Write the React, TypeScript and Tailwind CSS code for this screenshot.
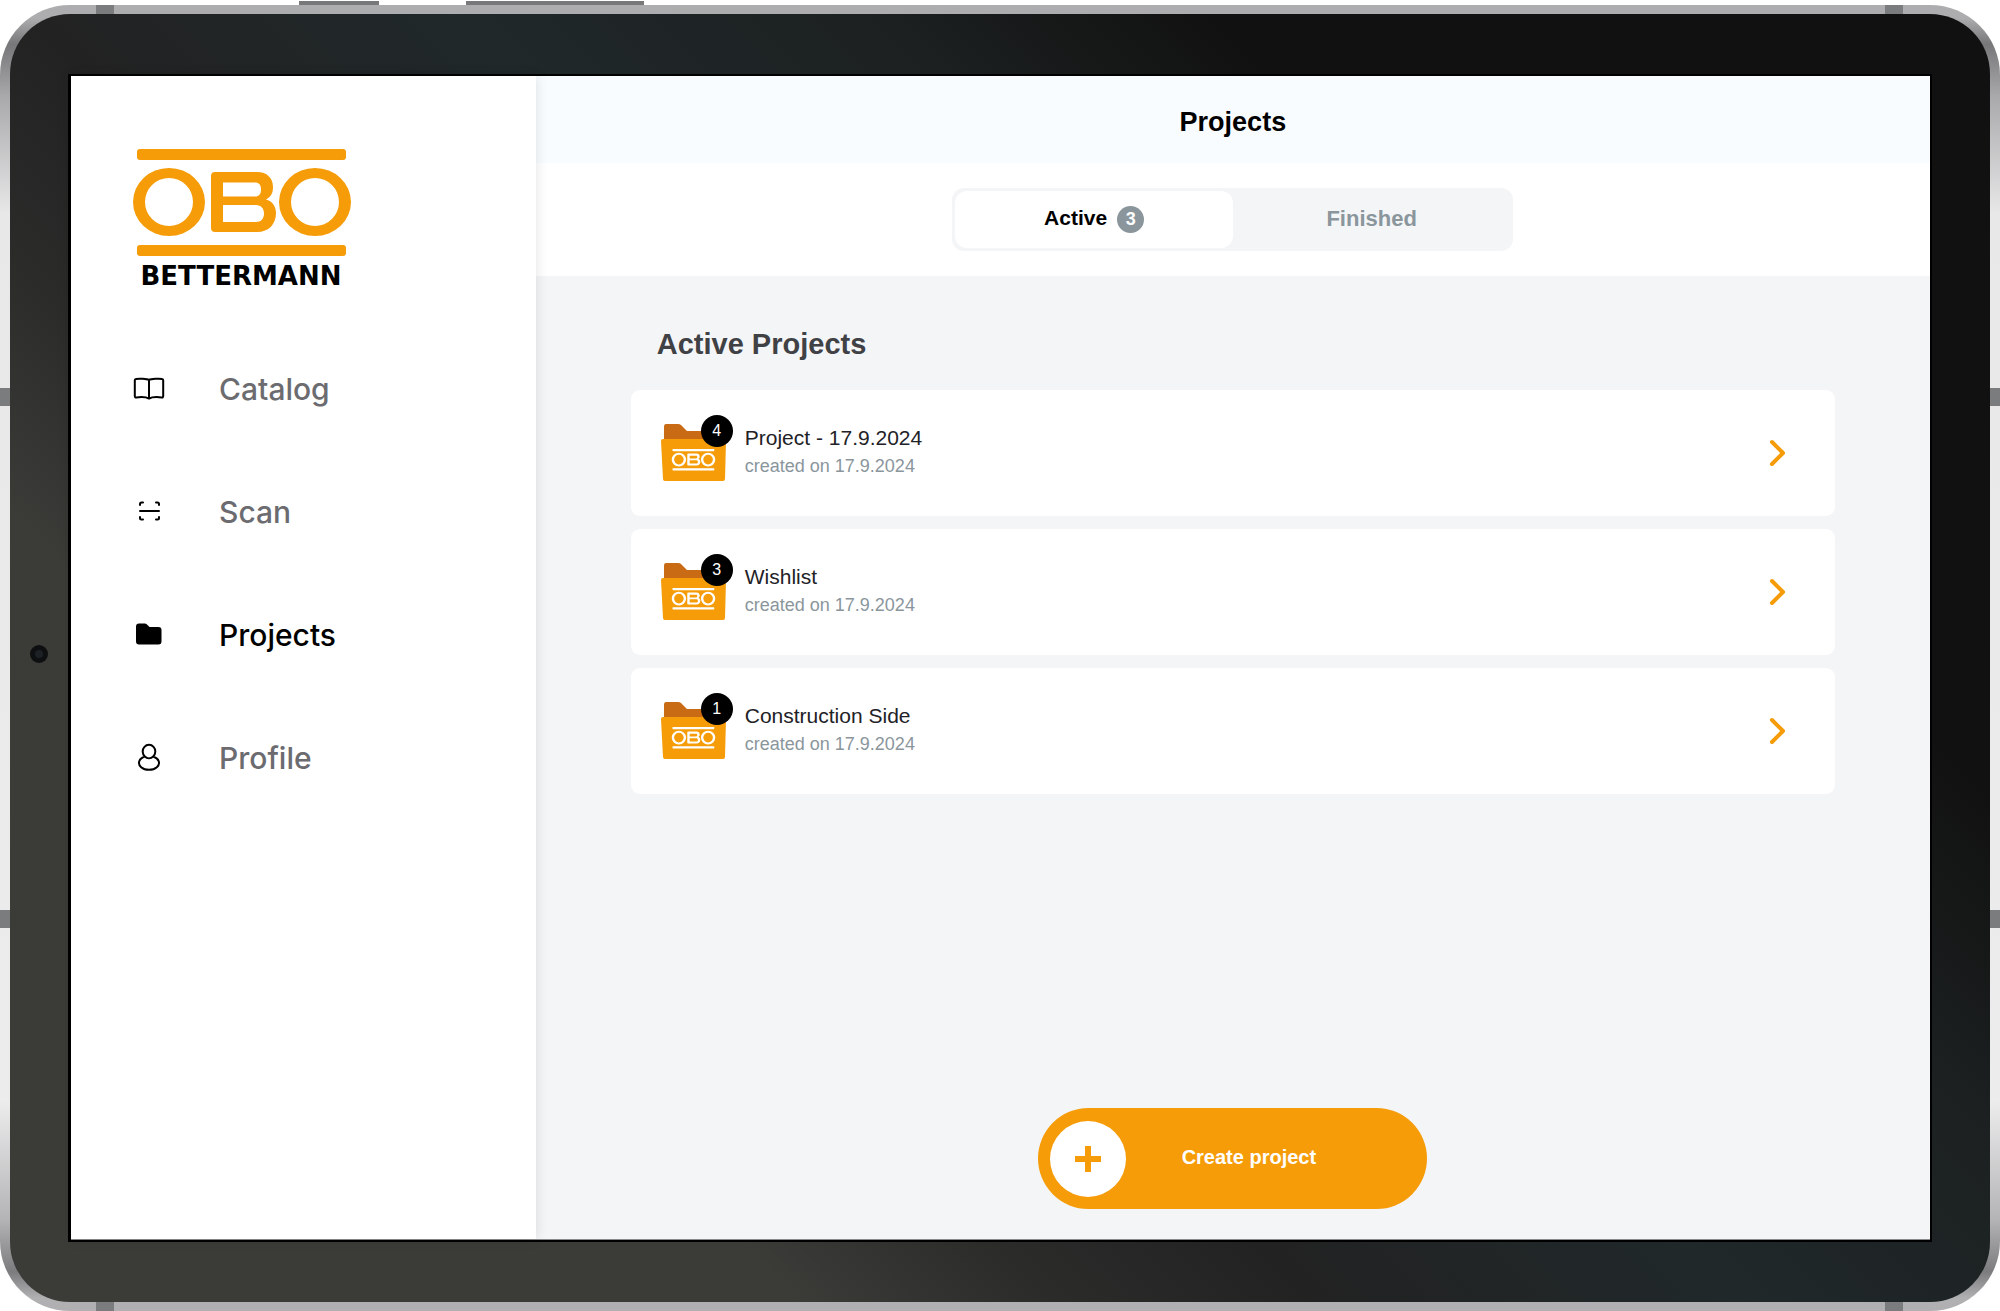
import React from "react";

const HELVETICA = "font-['Liberation_Sans',Arial,sans-serif]";

function BrandMark({ color }: { color: string }) {
  return (
    <g fill={color}>
      <rect x="5" y="0" width="209" height="11" rx="3" />
      <rect x="5" y="96" width="209" height="11" rx="3" />
      <path
        fillRule="evenodd"
        d="M1 53a36 34 0 1 0 72 0a36 34 0 1 0-72 0zM13 53a24 24 0 1 0 48 0a24 24 0 1 0-48 0z"
      />
      <path
        fillRule="evenodd"
        d="M147 53a36 34 0 1 0 72 0a36 34 0 1 0-72 0zM159 53a24 24 0 1 0 48 0a24 24 0 1 0-48 0z"
      />
      <path
        fillRule="evenodd"
        d="M83 23H125C135 23 141 29 141 38C141 44 139 48 134 50.500C140 52 144 57 144 64C144 75 137 83 125 83H83Q79 83 79 79V27Q79 23 83 23zM91 33.500V47.500H123C127 47.500 129 45 129 40.500C129 36 127 33.500 123 33.500zM91 56V73H124C129 73 132 69.500 132 64.500C132 59.500 129 56 124 56z"
      />
    </g>
  );
}

function Logo() {
  return (
    <svg className="h-[142px] w-[220px]" viewBox="0 0 220 142" role="img" aria-label="OBO Bettermann">
      <BrandMark color="#f59c08" />
      <text
        x="109"
        y="136"
        textAnchor="middle"
        className="fill-black font-['DejaVu_Sans',sans-serif] text-[26px] font-bold"
      >
        BETTERMANN
      </text>
    </svg>
  );
}

function BookIcon() {
  return (
    <svg className="h-8 w-8" viewBox="0 0 32 32" fill="none" stroke="currentColor" strokeWidth="2" strokeLinejoin="round" strokeLinecap="round" aria-hidden="true">
      <path d="M16 7C14 5.600 5 5.600 3 6Q1.800 6.200 1.800 7.300V23Q1.800 24.600 3.300 24.400C7 24 13 23.800 16 25.600C19 23.800 25 24 28.700 24.400Q30.200 24.600 30.200 23V7.300Q30.200 6.200 29 6C27 5.600 18 5.600 16 7zM16 7V25" />
    </svg>
  );
}

function ScanIcon() {
  return (
    <svg className="h-8 w-8" viewBox="0 0 32 32" fill="none" stroke="currentColor" strokeWidth="2" strokeLinecap="round" strokeLinejoin="round" aria-hidden="true">
      <path d="M7 9V8Q7 6.500 8.500 6.500H10M23 6.500H24.500Q26 6.500 26 8V9M26 21V22Q26 23.500 24.500 23.500H23M10 23.500H8.500Q7 23.500 7 22V21M7 15H26" />
    </svg>
  );
}

function FolderIcon() {
  return (
    <svg className="h-8 w-8" viewBox="0 0 32 32" fill="currentColor" aria-hidden="true">
      <path d="M3 7.500Q3 4.500 6 4.500H12Q13.500 4.500 14.500 6L16.500 8H25.500Q28.500 8 28.500 11V22.500Q28.500 25.500 25.500 25.500H6Q3 25.500 3 22.500z" />
    </svg>
  );
}

function ProfileIcon() {
  return (
    <svg className="h-8 w-8" viewBox="0 0 32 32" fill="none" stroke="currentColor" strokeWidth="2" aria-hidden="true">
      <path d="M11.800 14.500A6.300 6.700 0 1 1 20.200 14.500A10 7 0 1 1 11.800 14.500A6.300 6.700 0 0 0 20.200 14.500" />
    </svg>
  );
}

function ProjectFolder() {
  return (
    <svg className="h-[58px] w-[66px]" viewBox="0 0 66 58" aria-hidden="true">
      <path d="M3 4Q3 1 5 1H17Q19 1 20 2L26 8H60V26H3z" fill="#c96a14" />
      <path d="M2 16H63Q65 16 65 18L64 56Q64 58 62 58H4Q2 58 2 56L0 18Q0 16 2 16z" fill="#f59c08" />
      <g transform="translate(10.500 26) scale(0.2)">
        <BrandMark color="#ffffff" />
      </g>
    </svg>
  );
}

const navItems = [
  { label: "Catalog", icon: <BookIcon />, active: false },
  { label: "Scan", icon: <ScanIcon />, active: false },
  { label: "Projects", icon: <FolderIcon />, active: true },
  { label: "Profile", icon: <ProfileIcon />, active: false },
];

const projects = [
  { name: "Project - 17.9.2024", created: "created on 17.9.2024", count: 4 },
  { name: "Wishlist", created: "created on 17.9.2024", count: 3 },
  { name: "Construction Side", created: "created on 17.9.2024", count: 1 },
];

function Sidebar() {
  return (
    <aside className="z-10 flex w-1/4 shrink-0 flex-col bg-white pt-[73px] pl-[61px] shadow-[0_0_12px_rgba(0,0,0,0.12)]">
      <Logo />
      <nav className="mt-[74px] flex flex-col gap-[75px]">
        {navItems.map((item) => (
          <a
            key={item.label}
            href="#"
            aria-current={item.active ? "page" : undefined}
            className="flex h-12 items-center gap-[54px] pl-px"
          >
            <span className="text-black">{item.icon}</span>
            <span
              className={
                item.active
                  ? "font-['Inter',sans-serif] text-[30px] font-medium text-black"
                  : "font-['Inter',sans-serif] text-[30px] font-medium text-[#6b6b70]"
              }
            >
              {item.label}
            </span>
          </a>
        ))}
      </nav>
    </aside>
  );
}

function Tabs() {
  return (
    <div className="flex h-[113px] items-center justify-center bg-white">
      <div role="tablist" className="flex h-[63px] w-[561px] rounded-xl bg-[#f4f5f7] p-[3px]">
        <button role="tab" aria-selected="true" className="flex flex-1 items-center justify-center gap-2.5 rounded-xl bg-white text-[21px] font-bold text-black">
          <span className="pb-1">Active</span>
          <span className="flex size-[27px] items-center justify-center rounded-full bg-[#8a969c] text-[18px] text-white">3</span>
        </button>
        <button role="tab" aria-selected="false" className="flex-1 pb-0.5 text-[22px] font-bold text-[#8a969c]">
          Finished
        </button>
      </div>
    </div>
  );
}

function ProjectRow({ name, created, count }: { name: string; created: string; count: number }) {
  return (
    <li>
      <a href="#" className="flex h-[126px] items-center rounded-[9px] bg-white pr-[47px] pb-0.5 pl-[30px]">
        <span className="relative shrink-0">
          <ProjectFolder />
          <span className="absolute -top-2 -right-1.5 flex size-8 items-center justify-center rounded-full bg-black text-[16px] text-white">
            {count}
          </span>
        </span>
        <span className="ml-[18px] flex flex-1 flex-col">
          <span className="text-[21px] leading-7 text-[#222226]">{name}</span>
          <span className="text-[18px] leading-7 text-[#8a969c]">{created}</span>
        </span>
        <svg className="h-8 w-5" viewBox="0 0 20 32" fill="none" stroke="#f59c08" strokeWidth="4" strokeLinecap="round" strokeLinejoin="round" aria-hidden="true">
          <path d="M4 6L15 17L4 28" />
        </svg>
      </a>
    </li>
  );
}

function Screen() {
  return (
    <div className={`flex flex-1 border-b border-[#8a8a8a] bg-[#f4f5f7] ${HELVETICA}`}>
      <Sidebar />
      <main className="flex flex-1 flex-col">
        <header className="flex h-[87px] items-center justify-center bg-[#f8fcff] pt-1.5">
          <h1 className="text-[27px] font-bold text-black">Projects</h1>
        </header>
        <Tabs />
        <section className="flex flex-1 flex-col px-[95px] pt-[46px] pb-[30px]">
          <h2 className="pl-[26px] text-[29px] leading-[44px] font-bold text-[#3f4145]">Active Projects</h2>
          <ul className="mt-6 flex flex-col gap-[13px]">
            {projects.map((project) => (
              <ProjectRow key={project.name} {...project} />
            ))}
          </ul>
          <button className="mt-auto flex h-[101px] w-[389px] items-center self-center rounded-full bg-[#f59c08] pr-14 pl-3 text-white">
            <span className="flex size-[76px] items-center justify-center rounded-full bg-white">
              <svg className="size-[26px]" viewBox="0 0 26 26" stroke="#f59c08" strokeWidth="6" aria-hidden="true">
                <path d="M13 0V26M0 13H26" />
              </svg>
            </span>
            <span className="flex-1 pb-1 text-[20px] font-bold">Create project</span>
          </button>
        </section>
      </main>
    </div>
  );
}

function SideBand({ className }: { className: string }) {
  return <span className={`absolute bg-[#7b7c7e] ${className}`} />;
}

export default function App() {
  return (
    <div className="relative flex min-h-screen flex-col bg-white pt-[5px]">
      <span className="absolute top-px left-[299px] h-1 w-20 bg-[#77787a]" />
      <span className="absolute top-px left-[466px] h-1 w-[178px] bg-[#77787a]" />
      <div className="relative flex flex-1 flex-col overflow-hidden rounded-[70px] bg-[linear-gradient(to_bottom,#adadaf_0%,#adadaf_1%,#77777a_3%,#a9a9ab_7%,#e8e8e9_16%,#ececed_84%,#b4b4b6_93%,#7c7c7f_97%,#b0b0b2_99%,#b0b0b2_100%)] px-2.5 pt-[9px] pb-[9px]">
        <SideBand className="top-0 left-24 h-[9px] w-[18px]" />
        <SideBand className="top-0 right-[97px] h-[9px] w-[18px]" />
        <SideBand className="bottom-0 left-24 h-[9px] w-[18px]" />
        <SideBand className="right-[97px] bottom-0 h-[9px] w-[18px]" />
        <SideBand className="top-[383px] left-0 h-[18px] w-2.5" />
        <SideBand className="top-[383px] right-0 h-[18px] w-2.5" />
        <SideBand className="top-[905px] left-0 h-[18px] w-2.5" />
        <SideBand className="top-[905px] right-0 h-[18px] w-2.5" />
        <div className="relative flex flex-1 flex-col rounded-[60px] bg-[linear-gradient(45deg,#3b3b38_24%,#2b2b2a_32%,#222222_40%,#20282a_53%,#1c2020_66%,#111111_76%)] px-[58px] pt-[60px] pb-[60px]">
          <span className="absolute top-[631px] left-5 flex size-[18px] items-center justify-center rounded-full bg-[#0e0f10]">
            <span className="size-2 rounded-full bg-[#1d2024]" />
          </span>
          <div className="flex flex-1 flex-col border-2 border-l-3 border-black">
            <Screen />
          </div>
        </div>
      </div>
    </div>
  );
}
